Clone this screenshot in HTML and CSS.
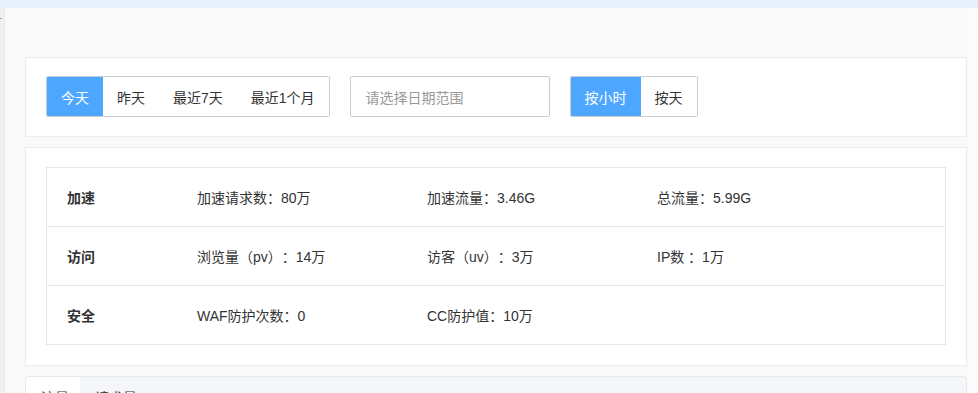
FILE: index.html
```html
<!DOCTYPE html>
<html lang="zh">
<head>
<meta charset="utf-8">
<link rel="stylesheet" href="styles.css">
</head>
<body>
<div class="topbar"></div>
<div class="wrap">
  <div class="side"><span class="mark"></span></div>
  <div class="main">
    <div class="card filter">
      <div class="btn-group">
        <span class="btn active">今天</span>
        <span class="btn">昨天</span>
        <span class="btn">最近7天</span>
        <span class="btn">最近1个月</span>
      </div>
      <div class="date-input">请选择日期范围</div>
      <div class="btn-group">
        <span class="btn active">按小时</span>
        <span class="btn">按天</span>
      </div>
    </div>
    <div class="card stats">
      <table class="stat-table">
        <tr>
          <td class="label">加速</td>
          <td class="cell">加速请求数：80万</td>
          <td class="cell">加速流量：3.46G</td>
          <td>总流量：5.99G</td>
        </tr>
        <tr>
          <td class="label">访问</td>
          <td class="cell">浏览量（pv）：14万</td>
          <td class="cell">访客（uv）：3万</td>
          <td>IP数 ：1万</td>
        </tr>
        <tr>
          <td class="label">安全</td>
          <td class="cell">WAF防护次数：0</td>
          <td class="cell">CC防护值：10万</td>
          <td></td>
        </tr>
      </table>
    </div>
    <div class="tabs-card">
      <div class="tabs">
        <span class="tab active">流量</span>
        <span class="tab">请求量</span>
      </div>
    </div>
  </div>
</div>
</body>
</html>
```
FILE: styles.css
```css
html, body {
  margin: 0;
  padding: 0;
}
body {
  width: 978px;
  height: 393px;
  overflow: hidden;
  background: #fcfcfc;
  font-family: "Liberation Sans", "Noto Sans CJK SC", sans-serif;
  font-size: 14px;
  color: #333;
  text-spacing-trim: space-all;
}
.topbar {
  height: 8px;
  background: #e8f1fb;
}
.wrap {
  display: flex;
  height: 385px;
}
.side {
  width: 5px;
  background: #f0f0f0;
  border-right: 1px solid #ebebeb;
  box-sizing: border-box;
  position: relative;
}
.mark {
  position: absolute;
  left: 0;
  top: 10px;
  width: 2px;
  height: 1px;
  background: #999;
}
.main {
  width: 963px;
  box-sizing: border-box;
  background: #f9f9f9;
  padding: 49px 1px 0 20px;
}
.card {
  background: #fff;
  border: 1px solid #ebebeb;
}
.filter {
  display: flex;
  align-items: center;
  gap: 20px;
  padding: 18px 20px 19px;
  height: 41px;
}
.btn-group {
  display: flex;
  height: 41px;
  border: 1px solid #c5cdd8;
  border-radius: 2px;
  box-sizing: border-box;
  overflow: hidden;
}
.btn {
  display: flex;
  align-items: center;
  padding: 0 14px;
  color: #333;
  background: #fff;
}
.btn.active {
  background: #4ea7ff;
  color: #fff;
}
.date-input {
  width: 200px;
  height: 41px;
  box-sizing: border-box;
  border: 1px solid #c5cdd8;
  border-radius: 2px;
  padding-left: 15px;
  display: flex;
  align-items: center;
  color: #999;
}
.stats {
  margin-top: 10px;
  padding: 19px 20px 20px;
}
.stat-table {
  width: 100%;
  border-collapse: collapse;
  border: 1px solid #e4e8ee;
}
.stat-table tr {
  border-top: 1px solid #e4e8ee;
}
.stat-table td {
  height: 58px;
  padding: 0;
  vertical-align: middle;
}
.stat-table .label {
  width: 130px;
  padding-left: 20px;
  font-weight: bold;
}
.stat-table .cell {
  width: 230px;
}
.tabs-card {
  margin-top: 10px;
  border: 1px solid #e6e9ee;
  border-radius: 4px 4px 0 0;
  background: #f5f6f9;
  height: 40px;
}
.tabs {
  display: flex;
}
.tab {
  padding: 12px 11px 10px 15px;
  line-height: 18px;
}
.tab.active {
  background: #fff;
  border-radius: 4px 4px 0 0;
}
```
